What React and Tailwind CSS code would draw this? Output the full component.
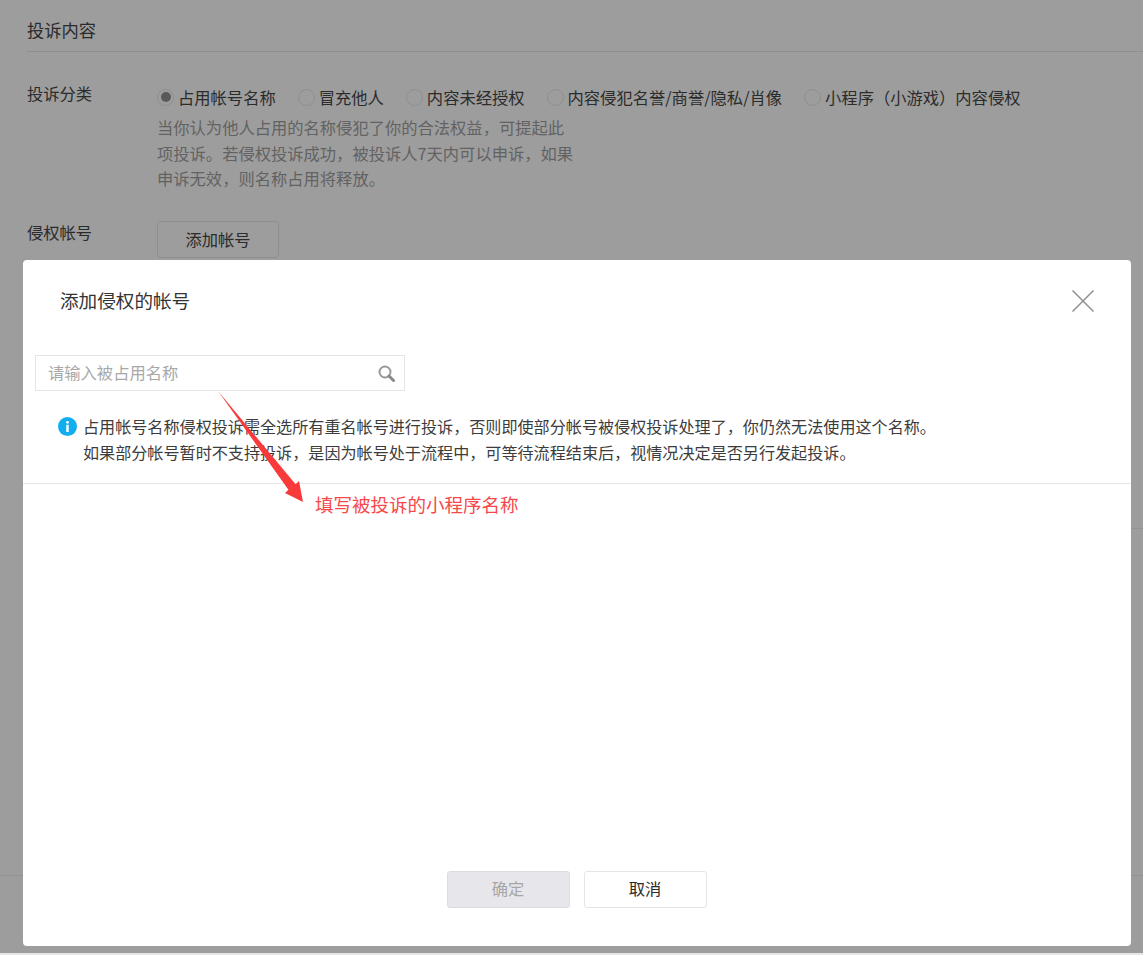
import React from 'react';

const FONT = "font-['Microsoft_YaHei','Noto_Sans_CJK_SC',sans-serif]";

const categories = ['占用帐号名称', '冒充他人', '内容未经授权', '内容侵犯名誉/商誉/隐私/肖像', '小程序（小游戏）内容侵权'];

const Radio = ({ label, checked }) => (
  <div className="flex items-center gap-[4px]">
    <span className="w-[17px] h-[17px] rounded-full border border-[#8f8f8f] flex items-center justify-center">
      {checked && <span className="w-[10px] h-[10px] rounded-full bg-[#595959]" />}
    </span>
    <span>{label}</span>
  </div>
);

const App = () => {
  return (
    <div className={`relative w-[1143px] h-[955px] overflow-hidden bg-[#9d9d9d] text-[#2b2b2b] text-[16.3px] ${FONT}`}>
      {/* Page behind the mask */}
      <div className="pl-[27px] pt-[18px]">
        <div className="h-[34px] text-[17.3px] leading-[24px] border-b border-[#8e8e8e]">投诉内容</div>

        <div className="flex mt-[29px]">
          <div className="w-[130px] leading-[24px]">投诉分类</div>
          <div>
            <div className="flex gap-[22px] leading-[24px] mt-[4px]">
              {categories.map((c, i) => (
                <Radio key={c} label={c} checked={i === 0} />
              ))}
            </div>
            <p className="w-[420px] mt-[6px] leading-[25.5px] text-[#626262]">
              当你认为他人占用的名称侵犯了你的合法权益，可提起此项投诉。若侵权投诉成功，被投诉人7天内可以申诉，如果申诉无效，则名称占用将释放。
            </p>
          </div>
        </div>

        <div className="flex mt-[29px]">
          <div className="w-[130px] leading-[22px]">侵权帐号</div>
          <button className="w-[122px] h-[37px] rounded-[3px] border border-[#8f8f8f] text-center">添加帐号</button>
        </div>
      </div>

      {/* Faint rules of the page showing beside the dialog */}
      <div className="absolute left-0 right-0 top-[875px] h-px bg-[#919191]" />
      <div className="absolute left-[1131px] right-0 top-[528px] h-px bg-[#939393]" />
      <div className="absolute left-0 right-0 top-[953px] h-[2px] bg-[#e6e6e6]" />

      {/* Dialog */}
      <div className="absolute left-[23px] top-[260px] w-[1108px] h-[686px] bg-white rounded-[4px] flex flex-col">
        <div className="flex items-center justify-between h-[82px] pl-[37px] pr-[37px]">
          <span className="text-[18.6px] leading-[26px] -mt-[2px] text-[#333333]">添加侵权的帐号</span>
          <svg viewBox="0 0 22 22" className="w-[22px] h-[22px]" stroke="#8f8f8f" strokeWidth="1.5">
            <line x1="0.5" y1="0.5" x2="21.5" y2="21.5" />
            <line x1="21.5" y1="0.5" x2="0.5" y2="21.5" />
          </svg>
        </div>

        <div className="ml-[12px] mt-[13px] w-[370px] h-[36px] border border-[#e5e5e5] flex items-center justify-between pl-[12px] pr-[9px]">
          <span className="text-[#a8a8a8] -mt-[2px]">请输入被占用名称</span>
          <svg viewBox="0 0 17 17" className="w-[17px] h-[17px]" fill="none">
            <circle cx="7" cy="7" r="5.5" stroke="#999999" strokeWidth="2" />
            <line x1="11" y1="11" x2="15.5" y2="15.5" stroke="#8a8a8a" strokeWidth="3" strokeLinecap="round" />
          </svg>
        </div>

        <div className="flex items-start gap-[6px] ml-[35px] mt-[22px] h-[70px] leading-[26px] text-[16.1px] text-[#3c3c3c]">
          <svg viewBox="0 0 20 20" className="w-[19px] h-[19px] mt-[4px] shrink-0">
            <circle cx="10" cy="10" r="10" fill="#10aeee" />
            <rect x="8.7" y="8.2" width="2.6" height="7.6" fill="#fff" />
            <circle cx="10" cy="5.6" r="1.5" fill="#fff" />
          </svg>
          <div>
            <p>占用帐号名称侵权投诉需全选所有重名帐号进行投诉，否则即使部分帐号被侵权投诉处理了，你仍然无法使用这个名称。</p>
            <p>如果部分帐号暂时不支持投诉，是因为帐号处于流程中，可等待流程结束后，视情况决定是否另行发起投诉。</p>
          </div>
        </div>

        <div className="border-t border-[#e6e6e6] flex-1" />

        <div className="flex justify-center gap-[14px] pb-[38px] pr-[1px]">
          <button className="w-[123px] h-[37px] pb-[2px] rounded-[3px] bg-[#e6e6eb] border border-[#dcdce0] text-[#a6a6a6]">确定</button>
          <button className="w-[123px] h-[37px] pb-[2px] rounded-[3px] bg-white border border-[#e5e5e5] text-[#2b2b2b]">取消</button>
        </div>
      </div>

      {/* Red annotation over the dialog */}
      <svg className="absolute left-0 top-0 pointer-events-none" width="1143" height="955" viewBox="0 0 1143 955">
        <path d="M218 391 L295.6 484.3 L299 481 L303 502 L285 493 L288.4 489.7 Z" fill="#f93a3a" />
      </svg>
      <span className="absolute left-[315px] top-[491px] text-[18.5px] leading-[26px] text-[#f5484a]">填写被投诉的小程序名称</span>
    </div>
  );
};

export default App;
